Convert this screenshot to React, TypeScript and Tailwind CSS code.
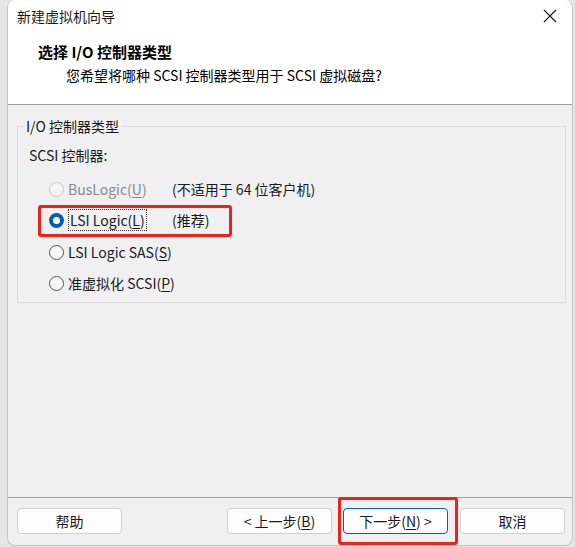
import React from 'react';

const font = { fontFamily: '"Noto Sans CJK SC", "Noto Sans", sans-serif' };

// Windows 11 style radio dot
const Radio: React.FC<{ checked?: boolean; disabled?: boolean }> = ({ checked, disabled }) => {
  if (checked) {
    return (
      <span className="flex h-[15px] w-[15px] shrink-0 items-center justify-center rounded-full bg-[#005fb8]">
        <span className="h-[7px] w-[7px] rounded-full bg-white" />
      </span>
    );
  }
  return (
    <span
      className={`h-[15px] w-[15px] shrink-0 rounded-full border ${
        disabled ? 'border-[#c8c8c8] bg-[#f5f5f5]' : 'border-[#555] bg-[#f7f7f7]'
      }`}
    />
  );
};

const Key: React.FC<{ k: string }> = ({ k }) => <span className="underline underline-offset-2">{k}</span>;

const Btn: React.FC<{ children: React.ReactNode; primary?: boolean }> = ({ children, primary }) => (
  <div
    className={`flex h-[26px] w-[105px] items-center justify-center rounded-[4px] border bg-[#fdfdfd] text-[14px] text-[#1a1a1a] ${
      primary ? 'border-[#005fb8]' : 'border-[#d0d0d0]'
    }`}
  >
    {children}
  </div>
);

export default function App() {
  return (
    <div className="flex h-[547px] w-[575px] overflow-hidden bg-[#e6e6e6]" style={font}>
      <div className="ml-[7px] flex h-[546px] w-[566px] flex-col overflow-hidden rounded-lg border-l border-r border-b border-[#c4c4c4] bg-[#f0f0f0]">
        {/* title bar + header */}
        <div className="border-b border-[#a0a0a0] bg-white">
          <div className="flex h-[32px] items-center justify-between pl-[9px] pr-[15px]">
            <span className="text-[14px] text-[#1a1a1a]">新建虚拟机向导</span>
            <svg width="14" height="14" viewBox="0 0 14 14" className="text-[#1a1a1a]">
              <path d="M1 1 L13 13 M13 1 L1 13" stroke="currentColor" strokeWidth="1.1" />
            </svg>
          </div>
          <div className="h-[72px] pl-[30px] pt-[10px]">
            <div className="text-[15px] font-bold leading-[20px] text-black">选择 I/O 控制器类型</div>
            <div className="pl-[28px] pt-[3px] text-[14px] leading-[20px] text-black">
              您希望将哪种 SCSI 控制器类型用于 SCSI 虚拟磁盘?
            </div>
          </div>
        </div>

        {/* body */}
        <div className="flex-1 px-[9px] pt-[13px]">
          <div className="relative mt-[8px] h-[177px] w-[549px] border border-[#dcdcdc]">
            <span className="absolute left-[6px] top-[-10px] bg-[#f0f0f0] px-[2px] text-[14px] leading-[18px] text-[#1a1a1a]">
              I/O 控制器类型
            </span>
            <div className="pl-[11px] pt-[18px] text-[14px] leading-[20px] text-[#1a1a1a]">SCSI 控制器:</div>
            <div className="flex flex-col pl-[31px] pt-[9px] text-[14px] text-[#1a1a1a]">
              <div className="flex h-[31px] items-center">
                <Radio disabled />
                <span className="ml-[4px] w-[104px] text-[#8a8a8a]">
                  BusLogic(<Key k="U" />)
                </span>
                <span>(不适用于 64 位客户机)</span>
              </div>
              <div className="relative flex h-[31px] items-center">
                <div className="absolute left-[-11px] top-[0px] h-[32px] w-[194px] rounded-[3px] border-[3px] border-[#e8241c]" />
                <Radio checked />
                <span className="ml-[4px] w-[104px]">
                  <span className="border border-dotted border-[#333] px-[1px]">
                    LSI Logic(<Key k="L" />)
                  </span>
                </span>
                <span>(推荐)</span>
              </div>
              <div className="flex h-[32px] items-center">
                <Radio />
                <span className="ml-[4px]">
                  LSI Logic SAS(<Key k="S" />)
                </span>
              </div>
              <div className="flex h-[31px] items-center">
                <Radio />
                <span className="ml-[4px]">
                  准虚拟化 SCSI(<Key k="P" />)
                </span>
              </div>
            </div>
          </div>
        </div>

        {/* footer */}
        <div className="h-[48px] border-t border-[#a0a0a0]">
          <div className="flex items-center pl-[9px] pr-[7px] pt-[10px]">
            <Btn>帮助</Btn>
            <div className="flex-1" />
            <Btn>
              &lt; 上一步(<Key k="B" />)
            </Btn>
            <div className="relative ml-[11px]">
              <div className="absolute left-[-5px] top-[-11px] h-[48px] w-[120px] rounded-[3px] border-[3px] border-[#e8241c]" />
              <Btn primary>
                下一步(<Key k="N" />) &gt;
              </Btn>
            </div>
            <div className="ml-[12px]">
              <Btn>取消</Btn>
            </div>
          </div>
        </div>
      </div>
    </div>
  );
}
